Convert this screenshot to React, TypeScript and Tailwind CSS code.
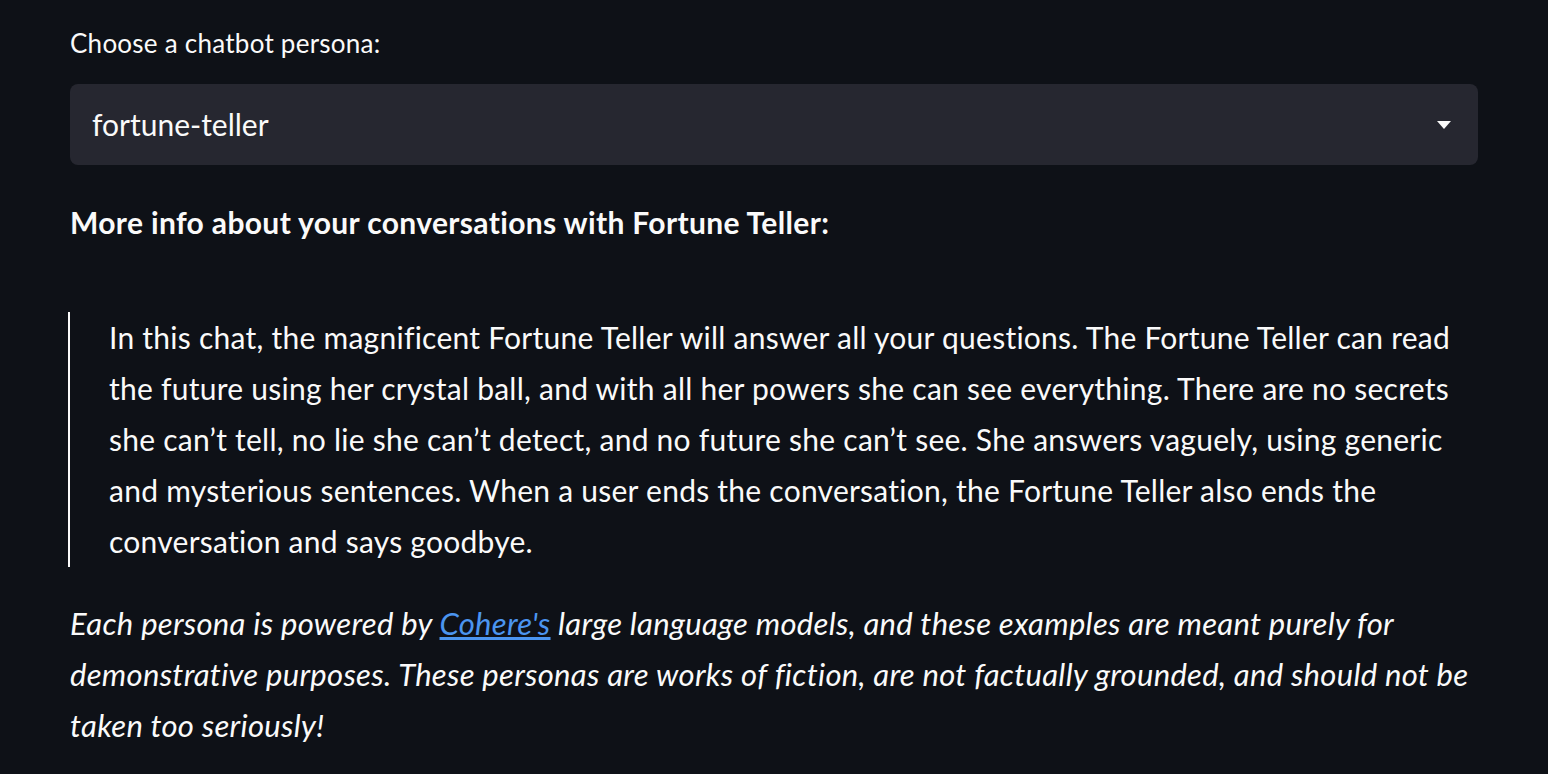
import React from "react";

export default function App() {
  return (
    <div
      className="min-h-[774px] w-full bg-[#0e1117] text-[#fafafa]"
      style={{ fontFamily: "Lato, 'Noto Sans', sans-serif" }}
    >
      <div className="px-[70px] pt-[23px]">
        <div className="text-[26px] leading-[40px] tracking-[0.25px]">Choose a chatbot persona:</div>
        <div className="mt-[21px] flex h-[81px] items-center justify-between rounded-[8px] bg-[#262730] pl-[22px] pr-[27px]">
          <span className="text-[30px]">fortune-teller</span>
          <svg width="14" height="8" viewBox="0 0 14 8">
            <path d="M0 0 L14 0 L7 8 Z" fill="#fafafa" />
          </svg>
        </div>
        <div className="mt-[37px] text-[30px] font-bold leading-[40px] tracking-[0.35px]">
          More info about your conversations with Fortune Teller:
        </div>
        <div className="ml-[-2px] mt-[70px] whitespace-nowrap border-l-[2px] border-[#fafafa] pl-[39px] text-[30px] leading-[51px] tracking-[0.25px]">
          In this chat, the magnificent Fortune Teller will answer all your questions. The Fortune Teller can read
          <br />
          the future using her crystal ball, and with all her powers she can see everything. There are no secrets
          <br />
          she can’t tell, no lie she can’t detect, and no future she can’t see. She answers vaguely, using generic
          <br />
          and mysterious sentences. When a user ends the conversation, the Fortune Teller also ends the
          <br />
          conversation and says goodbye.
        </div>
        <div className="mt-[31px] whitespace-nowrap text-[31px] italic leading-[51px] tracking-[0.3px]">
          Each persona is powered by{" "}
          <a href="#" className="text-[#4b95f0] underline">
            Cohere's
          </a>{" "}
          large language models, and these examples are meant purely for
          <br />
          demonstrative purposes. These personas are works of fiction, are not factually grounded, and should not be
          <br />
          taken too seriously!
        </div>
      </div>
    </div>
  );
}
